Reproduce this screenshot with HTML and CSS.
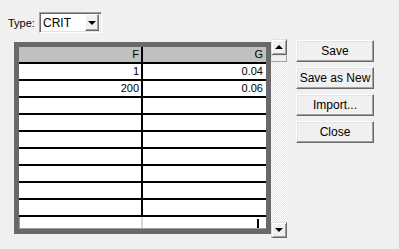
FILE: index.html
```html
<!DOCTYPE html>
<html lang="en">
<head>
  <meta charset="UTF-8">
  <title>Curve Table</title>
  <link rel="stylesheet" href="styles.css">
</head>
<body>
  <div class="window">
    <div class="type-row">
      <label class="type-label">Type:</label>
      <div class="combo">
        <span class="combo-text">CRIT</span>
        <span class="combo-btn"><span class="arrow-down"></span></span>
      </div>
    </div>

    <div class="content">
      <div class="grid">
        <div class="row head">
          <div class="cell">F</div>
          <div class="cell">G</div>
        </div>
        <div class="row"><div class="cell">1</div><div class="cell">0.04</div></div>
        <div class="row"><div class="cell">200</div><div class="cell">0.06</div></div>
        <div class="row"><div class="cell"></div><div class="cell"></div></div>
        <div class="row"><div class="cell"></div><div class="cell"></div></div>
        <div class="row"><div class="cell"></div><div class="cell"></div></div>
        <div class="row"><div class="cell"></div><div class="cell"></div></div>
        <div class="row"><div class="cell"></div><div class="cell"></div></div>
        <div class="row"><div class="cell"></div><div class="cell"></div></div>
        <div class="row"><div class="cell"></div><div class="cell"></div></div>
        <div class="row edit">
          <div class="cell"></div>
          <div class="cell"><span class="caret"></span></div>
        </div>
      </div>

      <div class="scrollbar">
        <div class="sb-btn"><span class="arrow-up"></span></div>
        <div class="sb-thumb"></div>
        <div class="sb-track"></div>
        <div class="sb-btn"><span class="arrow-down"></span></div>
      </div>

      <div class="actions">
        <button class="btn">Save</button>
        <button class="btn">Save as New</button>
        <button class="btn">Import...</button>
        <button class="btn">Close</button>
      </div>
    </div>
  </div>
</body>
</html>
```

FILE: styles.css
```css
* {
  margin: 0;
  padding: 0;
  box-sizing: border-box;
  font-family: "Liberation Sans", Arial, sans-serif;
  font-size: 11px;
}

body {
  background-color: #f0f0f0;
  color: #000;
  width: 399px;
  height: 249px;
  overflow: hidden;
}

.window {
  height: 249px;
  border-bottom: 1px solid #c5dbf1;
}

/* Type selector */
.type-row {
  display: flex;
  align-items: center;
  height: 21px;
  margin-top: 12px;
  padding-left: 8px;
}

.type-label {
  width: 31px;
}

.combo {
  display: flex;
  align-items: center;
  width: 63px;
  height: 21px;
  background-color: #fff;
  border: 1px solid;
  border-color: #a0a0a0 #fff #fff #a0a0a0;
  box-shadow: inset 1px 1px #696969, inset -1px -1px #e3e3e3;
  padding: 2px;
}

.combo-text {
  flex: 1;
  padding-left: 1px;
  font-size: 12px;
}

.combo-btn {
  display: flex;
  align-items: center;
  justify-content: center;
  width: 14px;
  height: 17px;
  background-color: #f0f0f0;
  border: 1px solid;
  border-color: #fff #696969 #696969 #fff;
  box-shadow: inset -1px -1px #a0a0a0;
}

.arrow-down {
  width: 0;
  height: 0;
  border-left: 4px solid transparent;
  border-right: 4px solid transparent;
  border-top: 4px solid #000;
}

.arrow-up {
  width: 0;
  height: 0;
  border-left: 4px solid transparent;
  border-right: 4px solid transparent;
  border-bottom: 4px solid #000;
}

/* Grid + scrollbar + buttons */
.content {
  display: flex;
  align-items: flex-start;
  margin-top: 5px;
}

.grid {
  margin-left: 14px;
  margin-top: 4px;
  width: 257px;
  height: 192px;
  border: 5px solid #696969;
  background-color: #fff;
  overflow: hidden;
}

.row {
  display: flex;
  height: 17px;
  border-bottom: 2px solid #000;
}

.row.head {
  background-color: #c0c0c0;
}

.cell {
  width: 123px;
  height: 15px;
  line-height: 15px;
  text-align: right;
  padding-right: 3px;
}

.cell:first-child {
  width: 124px;
  border-right: 2px solid #000;
  padding-right: 2px;
}

.row.edit {
  height: 12px;
  border-bottom: 1px solid #a0a0a0;
  border-left: 1px solid #a0a0a0;
}

.row.edit .cell {
  height: 11px;
  position: relative;
}

.row.edit .cell:first-child {
  width: 123px;
  border-right: 2px solid #d8d8d8;
}

.caret {
  position: absolute;
  right: 7px;
  top: 2px;
  width: 2px;
  height: 9px;
  background-color: #000;
}

.scrollbar {
  display: flex;
  flex-direction: column;
  width: 17px;
  height: 199px;
  margin-top: 1px;
}

.sb-btn {
  display: flex;
  align-items: center;
  justify-content: center;
  width: 16px;
  height: 16px;
  background-color: #f0f0f0;
  border: 1px solid;
  border-color: #e3e3e3 #696969 #696969 #e3e3e3;
  box-shadow: inset 1px 1px #fff, inset -1px -1px #a0a0a0;
}

.sb-thumb {
  width: 16px;
  height: 7px;
  background-color: #f0f0f0;
  border: 1px solid;
  border-color: #e3e3e3 #a0a0a0 #a0a0a0 #e3e3e3;
}

.sb-track {
  flex: 1;
  background: repeating-conic-gradient(#fff 0 25%, #e6e6e6 0 50%) 0 0 / 2px 2px;
}

.actions {
  display: flex;
  flex-direction: column;
  gap: 5px;
  margin-left: 8px;
  margin-top: 2px;
}

.btn {
  width: 78px;
  height: 22px;
  background-color: #f0f0f0;
  border: 1px solid;
  border-color: #fff #696969 #696969 #fff;
  box-shadow: inset -1px -1px #a0a0a0, inset 1px 1px #e3e3e3;
  font-size: 12px;
  color: #000;
}
```
